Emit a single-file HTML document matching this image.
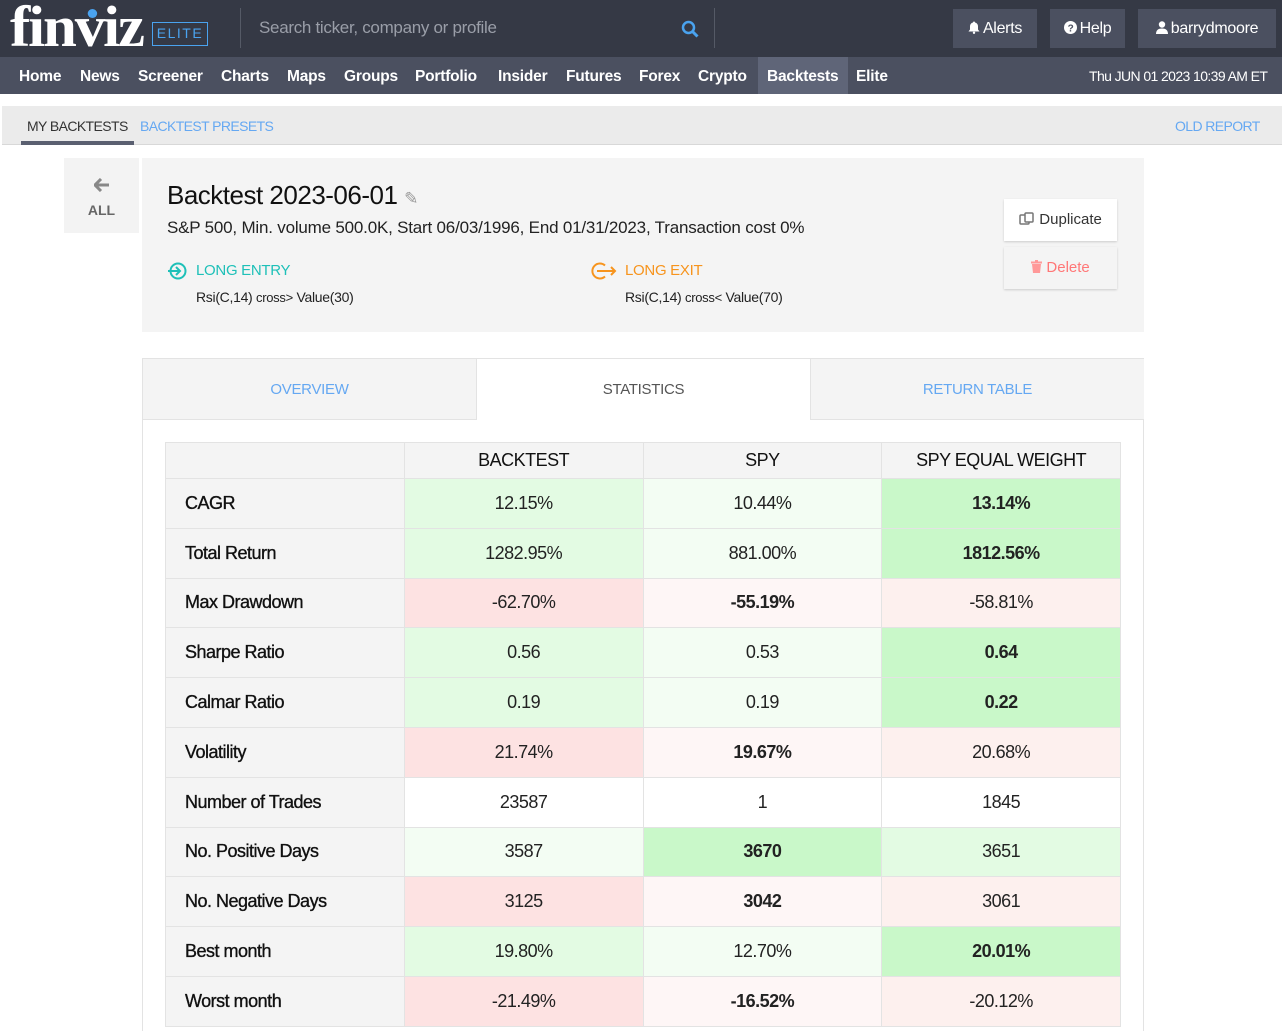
<!DOCTYPE html>
<html><head><meta charset="utf-8"><style>
*{box-sizing:border-box;margin:0;padding:0}
body{width:1282px;height:1031px;overflow:hidden;background:#fff;font-family:"Liberation Sans",Arial,sans-serif;position:relative;color:#222}
.top{position:absolute;left:0;top:0;width:1282px;height:57px;background:#353945}
.logo{position:absolute;left:10px;top:1px;font-family:"Liberation Serif",serif;font-weight:bold;font-size:58px;color:#fff;letter-spacing:-2px;line-height:52px;transform:scaleX(1.05);transform-origin:left}
.logo .dot{position:absolute;left:74px;top:8px;width:9px;height:9px;border-radius:50%;background:#4aa3ef}
.elite{position:absolute;left:152px;top:22px;width:56px;height:24px;border:1.5px solid #4aa3ef;color:#4aa3ef;font-size:14px;letter-spacing:1.5px;text-align:center;line-height:21px}
.sep{position:absolute;top:8px;width:1px;height:40px;background:#555a66}
.search{position:absolute;left:259px;top:18px;color:#9a9ea8;font-size:17px;letter-spacing:-0.3px}
.btn{position:absolute;top:9px;height:39px;background:#4b5060;color:#fff;font-size:16px;line-height:39px;text-align:center;letter-spacing:-0.3px}
.btn svg{vertical-align:-1px;margin-right:3px}
.nav{position:absolute;left:0;top:57px;width:1282px;height:37px;background:#4b5060}
.nav span{position:absolute;top:0;height:37px;line-height:39px;color:#fff;font-weight:bold;font-size:15.5px;letter-spacing:-0.2px}
.sub{position:absolute;left:2px;top:106px;width:1280px;height:39px;background:#ebebeb;border-bottom:1px solid #d8d8d8}
.sub span{position:absolute;top:12px;font-size:14px;color:#65a8f2;letter-spacing:-0.6px}
.back{position:absolute;left:64px;top:158px;width:75px;height:75px;background:#f3f3f3;text-align:center;color:#666;font-size:14px;font-weight:bold}
.card{position:absolute;left:142px;top:158px;width:1002px;height:174px;background:#f4f4f4}
.tabs{position:absolute;left:142px;top:358px;width:1002px;height:673px;border:1px solid #e3e3e3;border-bottom:none}
.tab{position:absolute;top:0;height:61px;line-height:61px;text-align:center;font-size:15px;color:#65a8f2;background:#f4f4f4;border-bottom:1px solid #e3e3e3;letter-spacing:-0.3px}
table{position:absolute;left:165px;top:442px;border-collapse:collapse;width:956px;table-layout:fixed}
td{border:1px solid #e3e3e3;text-align:center;font-size:18px;height:49.8px;color:#222;letter-spacing:-0.5px}
tr.h td{height:36px;background:#f4f4f4;font-size:18px;color:#111}
td.l{text-align:left;padding-left:19px;background:#f4f4f4;color:#111;-webkit-text-stroke:0.35px #111}
.g1{background:#e3fbe3}.g2{background:#f3fdf3}.g3{background:#c9f8c9;font-weight:bold}
.r1{background:#fde2e2}.r0{background:#fef6f6;font-weight:bold}.r2{background:#fdf0ee}
</style></head><body>
<div class="top">
 <div class="logo">finviz<div class="dot"></div></div>
 <div class="elite">ELITE</div>
 <div class="sep" style="left:240px"></div>
 <div class="search">Search ticker, company or profile</div>
 <svg style="position:absolute;left:681px;top:20px" width="18" height="18" viewBox="0 0 18 18"><circle cx="7.5" cy="7.5" r="5.5" fill="none" stroke="#4aa3ef" stroke-width="2.5"/><path d="M11.5 11.5l5 5" stroke="#4aa3ef" stroke-width="3"/></svg>
 <div class="sep" style="left:714px"></div>
 <div class="btn" style="left:953px;width:84px"><svg width="12" height="13" viewBox="0 0 12 13"><path d="M6 0.5c.6 0 1 .4 1 1 2 .5 3 2 3 4v3l1.5 2h-11L2 8.5v-3c0-2 1-3.5 3-4 0-.6.4-1 1-1z" fill="#fff"/><circle cx="6" cy="11.8" r="1.2" fill="#fff"/></svg>Alerts</div>
 <div class="btn" style="left:1050px;width:75px"><svg width="13" height="13" viewBox="0 0 13 13"><circle cx="6.5" cy="6.5" r="6.5" fill="#fff"/><text x="6.5" y="10.5" font-size="10" font-weight="bold" text-anchor="middle" fill="#4b5060" font-family="Liberation Sans">?</text></svg>Help</div>
 <div class="btn" style="left:1138px;width:138px"><svg width="12" height="13" viewBox="0 0 12 13"><circle cx="6" cy="3.5" r="3.2" fill="#fff"/><path d="M0 13c0-4 2.5-5.5 6-5.5s6 1.5 6 5.5z" fill="#fff"/></svg>barrydmoore</div>
</div>
<div class="nav">
 <span style="left:19px">Home</span><span style="left:80px">News</span><span style="left:138px">Screener</span><span style="left:221px">Charts</span><span style="left:287px">Maps</span><span style="left:344px">Groups</span><span style="left:415px">Portfolio</span><span style="left:498px">Insider</span><span style="left:566px">Futures</span><span style="left:639px">Forex</span><span style="left:698px">Crypto</span>
 <span style="left:758px;width:90px;background:#5f6578;padding-left:9px">Backtests</span><span style="left:856px">Elite</span>
 <span style="left:1089px;font-weight:normal;font-size:14px;letter-spacing:-0.6px">Thu JUN 01 2023 10:39 AM ET</span>
</div>
<div class="sub">
 <span style="left:25px;color:#333">MY BACKTESTS</span>
 <div style="position:absolute;left:19px;top:35px;width:113px;height:4px;background:#5a5f70"></div>
 <span style="left:138px">BACKTEST PRESETS</span>
 <span style="left:1173px">OLD REPORT</span>
</div>
<div class="back"><svg style="margin-top:20px" width="16" height="14" viewBox="0 0 16 14"><path d="M7 1L1 7l6 6M1 7h14" fill="none" stroke="#888" stroke-width="3"/></svg><div style="margin-top:7px">ALL</div></div>
<div class="card">
 <div style="position:absolute;left:25px;top:22px;font-size:26px;color:#111;letter-spacing:-0.5px">Backtest 2023-06-01 <span style="font-size:17px;color:#999">&#x270E;</span></div>
 <div style="position:absolute;left:25px;top:60px;font-size:17px;color:#222;letter-spacing:-0.2px">S&amp;P 500, Min. volume 500.0K, Start 06/03/1996, End 01/31/2023, Transaction cost 0%</div>
 <svg style="position:absolute;left:25px;top:104px" width="22" height="18" viewBox="0 0 22 18"><circle cx="11" cy="9" r="7.5" fill="none" stroke="#1ec0b8" stroke-width="2"/><path d="M1 9h12M9 5l4 4-4 4" fill="none" stroke="#1ec0b8" stroke-width="2"/></svg>
 <div style="position:absolute;left:54px;top:104px;font-size:15px;color:#1ec0b8;letter-spacing:-0.3px">LONG ENTRY</div>
 <div style="position:absolute;left:54px;top:131px;font-size:14px;color:#222;letter-spacing:-0.3px">Rsi(C,14) <span style="font-size:13px">cross&gt;</span> Value(30)</div>
 <svg style="position:absolute;left:449px;top:104px" width="26" height="18" viewBox="0 0 26 18"><path d="M14 3.5A7.5 7.5 0 1 0 14 14.5" fill="none" stroke="#f7941d" stroke-width="2"/><path d="M6 9h18M20 5l4 4-4 4" fill="none" stroke="#f7941d" stroke-width="2"/></svg>
 <div style="position:absolute;left:483px;top:104px;font-size:15px;color:#f7941d;letter-spacing:-0.3px">LONG EXIT</div>
 <div style="position:absolute;left:483px;top:131px;font-size:14px;color:#222;letter-spacing:-0.3px">Rsi(C,14) <span style="font-size:13px">cross&lt;</span> Value(70)</div>
 <div style="position:absolute;left:862px;top:41px;width:113px;height:42px;background:#fff;box-shadow:0 1px 2px #ccc;font-size:15px;color:#333;line-height:42px;text-align:center"><svg width="16" height="14" viewBox="0 0 16 14" style="vertical-align:-2px"><rect x="1" y="3" width="9" height="9" rx="1" fill="none" stroke="#777" stroke-width="1.5"/><rect x="6" y="1" width="8" height="9" rx="1" fill="#fff" stroke="#777" stroke-width="1.5"/></svg> Duplicate</div>
 <div style="position:absolute;left:862px;top:89px;width:113px;height:42px;background:#f4f4f4;box-shadow:0 1px 2px #ccc;font-size:15px;color:#f77;line-height:42px;text-align:center"><svg width="11" height="13" viewBox="0 0 11 13" style="vertical-align:-1px"><rect x="0" y="1.5" width="11" height="2" fill="#f99"/><rect x="4" y="0" width="3" height="2" fill="#f99"/><path d="M1 4h9l-1 9H2z" fill="#f99"/></svg> Delete</div>
</div>
<div class="tabs">
 <div class="tab" style="left:0;width:334px;border-right:1px solid #e3e3e3">OVERVIEW</div>
 <div class="tab" style="left:334px;width:333px;background:#fff;color:#555;border-bottom:none">STATISTICS</div>
 <div class="tab" style="left:667px;width:334px;border-left:1px solid #e3e3e3">RETURN TABLE</div>
</div>
<table>
<tr class="h"><td></td><td>BACKTEST</td><td>SPY</td><td>SPY EQUAL WEIGHT</td></tr>
<tr><td class="l">CAGR</td><td class="g1">12.15%</td><td class="g2">10.44%</td><td class="g3">13.14%</td></tr>
<tr><td class="l">Total Return</td><td class="g1">1282.95%</td><td class="g2">881.00%</td><td class="g3">1812.56%</td></tr>
<tr><td class="l">Max Drawdown</td><td class="r1">-62.70%</td><td class="r0">-55.19%</td><td class="r2">-58.81%</td></tr>
<tr><td class="l">Sharpe Ratio</td><td class="g1">0.56</td><td class="g2">0.53</td><td class="g3">0.64</td></tr>
<tr><td class="l">Calmar Ratio</td><td class="g1">0.19</td><td class="g2">0.19</td><td class="g3">0.22</td></tr>
<tr><td class="l">Volatility</td><td class="r1">21.74%</td><td class="r0">19.67%</td><td class="r2">20.68%</td></tr>
<tr><td class="l">Number of Trades</td><td>23587</td><td>1</td><td>1845</td></tr>
<tr><td class="l">No. Positive Days</td><td class="g2">3587</td><td class="g3">3670</td><td class="g1">3651</td></tr>
<tr><td class="l">No. Negative Days</td><td class="r1">3125</td><td class="r0">3042</td><td class="r2">3061</td></tr>
<tr><td class="l">Best month</td><td class="g1">19.80%</td><td class="g2">12.70%</td><td class="g3">20.01%</td></tr>
<tr><td class="l">Worst month</td><td class="r1">-21.49%</td><td class="r0">-16.52%</td><td class="r2">-20.12%</td></tr>
</table>
</body></html>
